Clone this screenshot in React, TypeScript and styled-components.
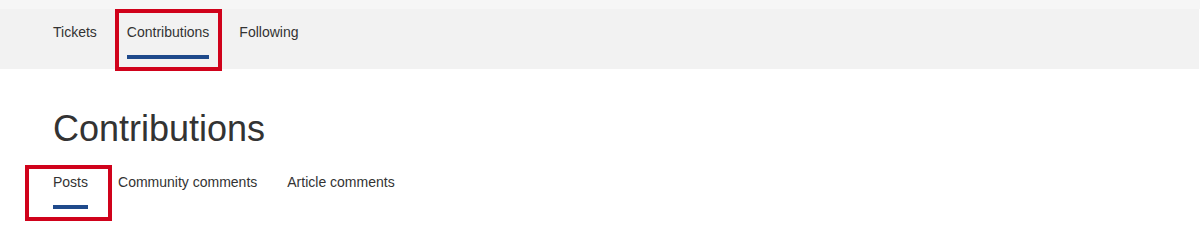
import React from "react";
import styled, { createGlobalStyle } from "styled-components";

const GlobalStyle = createGlobalStyle`
  html, body { margin: 0; padding: 0; background: #ffffff; }
  body {
    font-family: "Liberation Sans", Arial, Helvetica, sans-serif;
    color: #333333;
  }
  * { box-sizing: border-box; }
`;

const Page = styled.div`
  width: 1200px;
  height: 235px;
  overflow: hidden;
  background: #ffffff;
`;

const TopStrip = styled.div`
  height: 9px;
  background: #f6f6f6;
`;

const NavBar = styled.nav`
  height: 60px;
  background: #f2f2f2;
  display: flex;
  align-items: flex-start;
  gap: 30px;
  padding-left: 53px;
  margin-right: 1px;
`;

const NavItem = styled.a<{ $active?: boolean }>`
  position: relative;
  display: block;
  height: 60px;
  padding-top: 13px;
  font-size: 14px;
  line-height: 20px;
  color: #333333;
  text-decoration: none;
  white-space: nowrap;
  cursor: pointer;
`;

const Label = styled.span<{ $active?: boolean }>`
  display: block;
  padding-bottom: 13px;
  border-bottom: 4px solid ${(p) => (p.$active ? "#1f4a8b" : "transparent")};
`;

const Highlight = styled.span<{ $t: number; $r: number; $b: number; $l: number }>`
  position: absolute;
  top: ${(p) => p.$t}px;
  right: ${(p) => p.$r}px;
  bottom: ${(p) => p.$b}px;
  left: ${(p) => p.$l}px;
  border: 4px solid #d0021b;
  pointer-events: none;
`;

const Main = styled.main`
  padding-left: 53px;
`;

const Heading = styled.h1`
  margin: 40px 0 16px;
  font-size: 36px;
  line-height: 40px;
  font-weight: 400;
  color: #333333;
`;

const Tabs = styled.div`
  display: flex;
  gap: 30px;
`;

const Tab = styled.a`
  position: relative;
  display: block;
  padding-top: 7px;
  font-size: 14px;
  line-height: 20px;
  color: #333333;
  text-decoration: none;
  white-space: nowrap;
  cursor: pointer;
`;

export default function App() {
  return (
    <Page>
      <GlobalStyle />
      <TopStrip />
      <NavBar>
        <NavItem>
          <Label>Tickets</Label>
        </NavItem>
        <NavItem $active>
          <Label $active>Contributions</Label>
          <Highlight $t={0} $r={-13} $b={-2} $l={-12} />
        </NavItem>
        <NavItem>
          <Label>Following</Label>
        </NavItem>
      </NavBar>
      <Main>
        <Heading>Contributions</Heading>
        <Tabs>
          <Tab>
            <Label $active>Posts</Label>
            <Highlight $t={0} $r={-24} $b={-12} $l={-28} />
          </Tab>
          <Tab>
            <Label>Community comments</Label>
          </Tab>
          <Tab>
            <Label>Article comments</Label>
          </Tab>
        </Tabs>
      </Main>
    </Page>
  );
}
